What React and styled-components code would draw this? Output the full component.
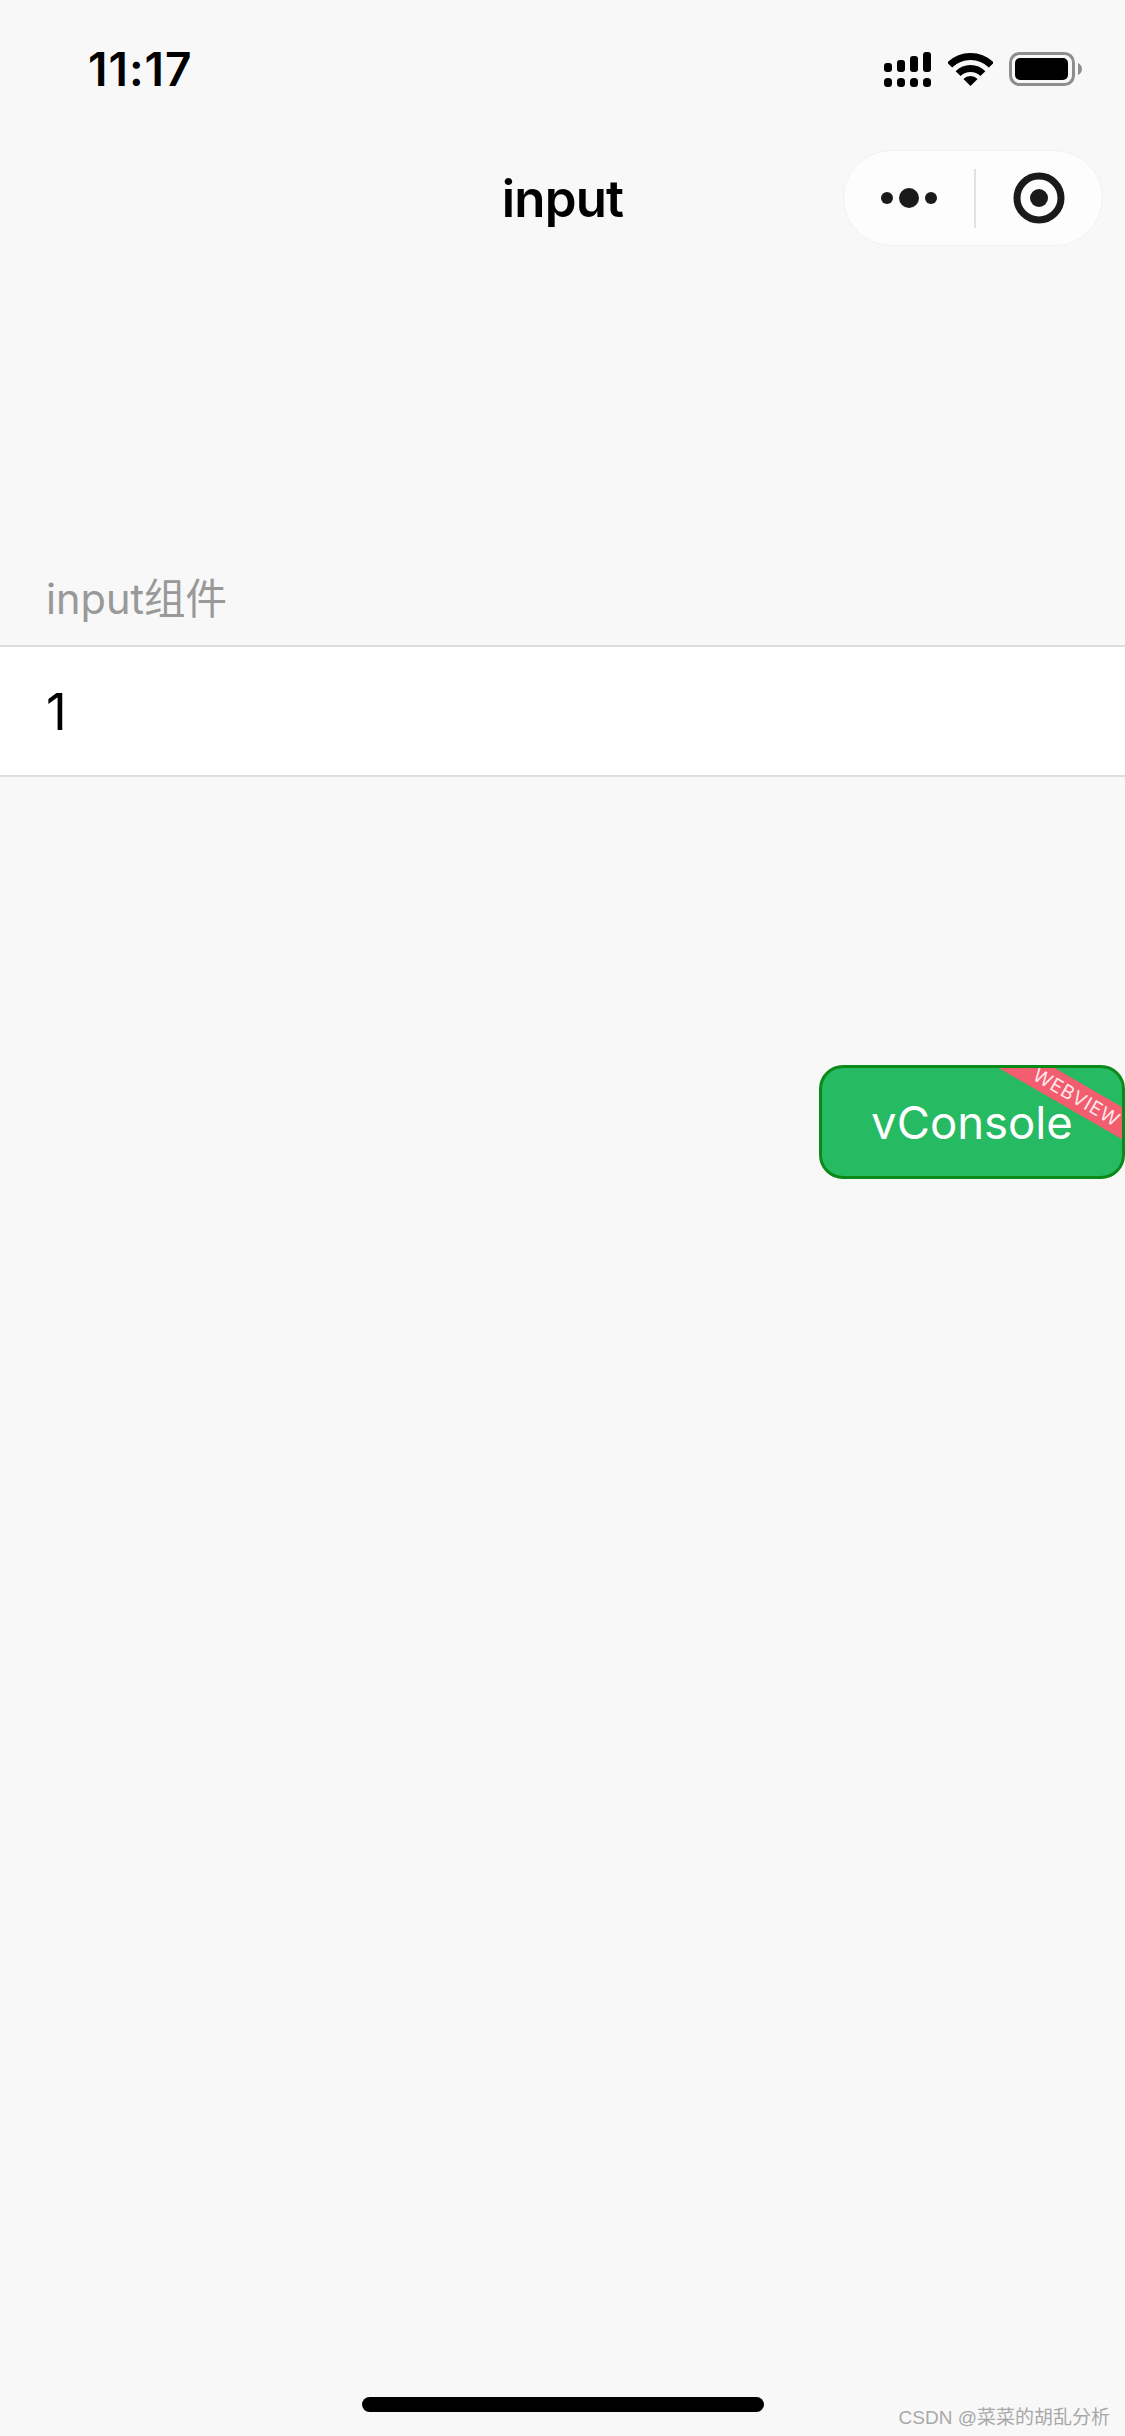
import React from "react";
import styled, { createGlobalStyle } from "styled-components";

const Global = createGlobalStyle`
  html, body { margin: 0; padding: 0; background: #f8f8f8; }
  body { font-family: Inter, "Noto Sans CJK SC", "Liberation Sans", sans-serif; }
  * { box-sizing: border-box; }
`;

const Page = styled.div`
  position: relative;
  width: 1125px;
  height: 2436px;
  overflow: hidden;
  background: #f8f8f8;
  color: #000;
`;

const StatusBar = styled.div`
  height: 132px;
  padding: 6px 43px 0 88px;
  display: flex;
  align-items: center;
  justify-content: space-between;
`;

const Time = styled.div`
  font-size: 46px;
  font-weight: 600;
  letter-spacing: 1px;
  color: #000;
`;

const StatusIcons = styled.div`
  display: flex;
  align-items: center;
  gap: 16.5px;
`;

const NavBar = styled.div`
  height: 132px;
  padding: 0 22px;
  display: grid;
  grid-template-columns: 1fr auto 1fr;
  align-items: center;
`;

const Title = styled.div`
  grid-column: 2;
  font-size: 51px;
  font-weight: 600;
  letter-spacing: -0.8px;
  color: #000;
`;

const Capsule = styled.div`
  grid-column: 3;
  justify-self: end;
  width: 260px;
  height: 96px;
  border-radius: 48px;
  background: #fdfdfd;
  border: 1px solid #f1f1f1;
  display: grid;
  grid-template-columns: 130px 1px 1fr;
  align-items: center;
  justify-items: center;
`;

const CapsuleDivider = styled.div`
  width: 2px;
  height: 59px;
  background: #e2e2e2;
`;

const SectionLabel = styled.div`
  height: 381px;
  padding: 0 0 16px 46px;
  display: flex;
  align-items: flex-end;
  font-size: 41.5px;
  line-height: 60px;
  color: #999;
`;

const InputRow = styled.div`
  height: 132px;
  padding-left: 46px;
  display: flex;
  align-items: center;
  background: #fff;
  border-top: 2px solid #dedede;
  border-bottom: 2px solid #dedede;
  font-size: 51px;
  color: #000;
`;

const VConsoleButton = styled.div`
  position: absolute;
  left: 819px;
  top: 1065px;
  width: 306px;
  height: 114px;
  border: 3px solid #0b8a1a;
  border-radius: 24px;
  background: #26ba62;
  color: #fff;
  font-size: 45.5px;
  display: flex;
  align-items: center;
  justify-content: center;
  overflow: hidden;
`;

const Ribbon = styled.div`
  position: absolute;
  left: 141px;
  top: 7px;
  width: 200px;
  height: 28px;
  padding-left: 32px;
  transform: rotate(30deg);
  background: #f25d6f;
  color: #ffe9ec;
  font-size: 19px;
  letter-spacing: 0.8px;
  display: flex;
  align-items: center;
  justify-content: center;
`;

const HomeBar = styled.div`
  position: absolute;
  left: 362px;
  top: 2397px;
  width: 402px;
  height: 15px;
  border-radius: 8px;
  background: #000;
`;

const Watermark = styled.div`
  position: absolute;
  right: 15px;
  top: 2405px;
  font-family: "Liberation Sans", "Noto Sans CJK SC", sans-serif;
  font-size: 19px;
  line-height: 26px;
  color: #a8a8a8;
`;

const SignalIcon = () => (
  <svg width="47" height="35" viewBox="0 0 47 35" fill="#000">
    <rect x="0" y="11" width="8" height="9" rx="3" />
    <rect x="13" y="8" width="8" height="12" rx="3" />
    <rect x="26" y="4" width="8" height="16" rx="3" />
    <rect x="39" y="0" width="8" height="20" rx="3" />
    <rect x="0" y="26" width="8" height="9" rx="3.5" />
    <rect x="13" y="26" width="8" height="9" rx="3.5" />
    <rect x="26" y="26" width="8" height="9" rx="3.5" />
    <rect x="39" y="26" width="8" height="9" rx="3.5" />
  </svg>
);

const WifiIcon = () => (
  <svg width="45" height="33" viewBox="0 0 45 33">
    <g fill="none" stroke="#000" strokeWidth="7">
      <path d="M1.64 12.14A29.5 29.5 0 0 1 43.36 12.14" />
      <path d="M10.13 20.63A17.5 17.5 0 0 1 34.87 20.63" />
    </g>
    <path d="M22.5 33L15.4 25.9A10 10 0 0 1 29.6 25.9Z" fill="#000" />
  </svg>
);

const BatteryIcon = () => (
  <svg width="73" height="34" viewBox="0 0 73 34">
    <rect x="1.5" y="1.5" width="63" height="31" rx="9" fill="none" stroke="#8e8e8e" strokeWidth="3" />
    <rect x="6" y="6" width="53" height="22" rx="5" fill="#000" />
    <path d="M69 11C71.5 12 73 14.5 73 17C73 19.5 71.5 22 69 23Z" fill="#8e8e8e" />
  </svg>
);

const MoreIcon = () => (
  <svg width="56" height="24" viewBox="0 0 56 24" fill="#1a1a1a">
    <circle cx="6" cy="12" r="6" />
    <circle cx="28" cy="12" r="10" />
    <circle cx="50" cy="12" r="6" />
  </svg>
);

const RecordIcon = () => (
  <svg width="52" height="52" viewBox="0 0 52 52">
    <circle cx="26" cy="26" r="22" fill="none" stroke="#1a1a1a" strokeWidth="7" />
    <circle cx="26" cy="26" r="9" fill="#1a1a1a" />
  </svg>
);

export default function App() {
  return (
    <Page>
      <Global />
      <StatusBar>
        <Time>11:17</Time>
        <StatusIcons>
          <SignalIcon />
          <WifiIcon />
          <BatteryIcon />
        </StatusIcons>
      </StatusBar>
      <NavBar>
        <Title>input</Title>
        <Capsule>
          <MoreIcon />
          <CapsuleDivider />
          <RecordIcon />
        </Capsule>
      </NavBar>
      <SectionLabel>input组件</SectionLabel>
      <InputRow>1</InputRow>
      <VConsoleButton>
        vConsole
        <Ribbon>WEBVIEW</Ribbon>
      </VConsoleButton>
      <HomeBar />
      <Watermark>CSDN @菜菜的胡乱分析</Watermark>
    </Page>
  );
}
